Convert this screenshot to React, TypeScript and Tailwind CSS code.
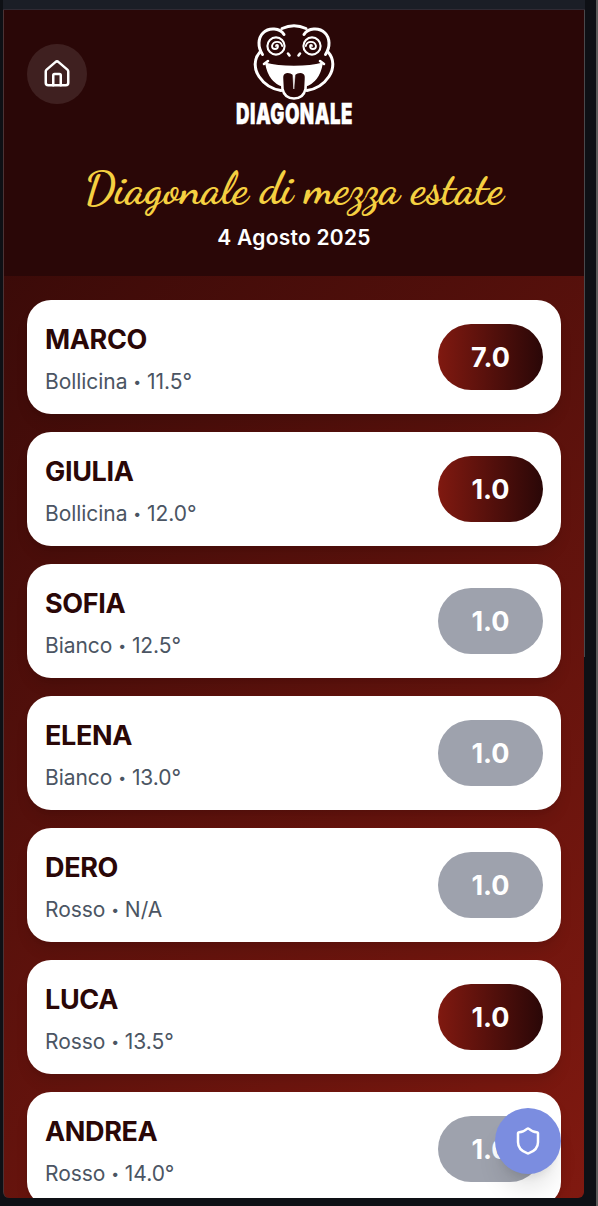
import { House, Shield } from "lucide-react";

type Entry = { name: string; drink: string; degree: string; score: string; active: boolean };

const entries: Entry[] = [
  { name: "MARCO", drink: "Bollicina", degree: "11.5°", score: "7.0", active: true },
  { name: "GIULIA", drink: "Bollicina", degree: "12.0°", score: "1.0", active: true },
  { name: "SOFIA", drink: "Bianco", degree: "12.5°", score: "1.0", active: false },
  { name: "ELENA", drink: "Bianco", degree: "13.0°", score: "1.0", active: false },
  { name: "DERO", drink: "Rosso", degree: "N/A", score: "1.0", active: false },
  { name: "LUCA", drink: "Rosso", degree: "13.5°", score: "1.0", active: true },
  { name: "ANDREA", drink: "Rosso", degree: "14.0°", score: "1.0", active: false },
];

const spiral = "M0 0A1 1 0 0 1 2 0A3 3 0 0 1 -4 0A5.200 5.200 0 0 1 6.200 0";

function Logo() {
  return (
    <svg className="ml-px h-[125px] w-[150px]" viewBox="0 0 150 125" fill="none" stroke="#fff" strokeWidth="3" strokeLinecap="round">
      <path d="M62 18.500Q74 13 86 18.500" />
      <path d="M64 24.500C60 18 49 17 43 23C38 28 37.500 37 42.500 44.500" />
      <path d="M84 24.500C88 18 99 17 105 23C110 28 110.500 37 105.500 44.500" />
      <path d="M40 42C33.500 49 34 59 39 66.500C44 74 51 79 61 80.500" />
      <path d="M108 42C114.500 49 114 59 109 66.500C104 74 97 79 87 80.500" />
      <circle cx="56" cy="36" r="8.600" strokeWidth="2.100" />
      <circle cx="92" cy="36" r="8.600" strokeWidth="2.100" />
      <path d={spiral} transform="translate(56 36)" strokeWidth="1.800" />
      <path d={spiral} transform="translate(92 36) scale(-1 1)" strokeWidth="1.800" />
      <path d="M68 43.500L69.500 45.500M80 43.500L78.500 45.500" strokeWidth="2.600" />
      <path d="M44 54L48 51M104 54L100 51" strokeWidth="2.600" />
      <path d="M46 53.500C60 57.500 88 57.500 102 53.500C100 65 94 73 85 76H63C54 73 48 65 46 53.500Z" fill="#fff" strokeWidth="1.600" />
      <path d="M62 69C61 60.500 69 60.500 74 64C79 60.500 87 60.500 86 69L85.500 79C84 86 80 88.500 74 88.500C68 88.500 64 86 62.500 79Z" fill="#2a0707" strokeWidth="2.600" />
      <path d="M72.800 63L73.800 79L75.200 63Z" fill="#fff" strokeWidth="0.600" />
      <text x="16" y="78.400" textLength="117" lengthAdjust="spacingAndGlyphs" transform="scale(1 1.450)" fill="#fff" strokeWidth="0.250" className="font-['Inter'] text-[19.500px] font-black tracking-[0.500px]">
        DIAGONALE
      </text>
    </svg>
  );
}

export default function App() {
  return (
    <div className="flex h-[1206px] w-[598px] overflow-hidden border-r-2 border-[#5c5c5c] bg-[#0e1015] font-['Inter',sans-serif]">
      <div className="flex w-full flex-col pl-[3px]">
        <div className="h-[10px] w-[582px] shrink-0 border-b border-[#302a33] bg-[#1b1e26]" />
        <div className="flex">
          <main className="relative h-[1188px] w-[581px] shrink-0 overflow-hidden rounded-b-md border-l border-[#4b3335] bg-linear-135/srgb from-[#2f0807] to-[#801910]">
            <header className="relative flex h-[266px] flex-col items-center bg-[#2a0707]">
              <button aria-label="Home" className="absolute top-[34px] left-[23px] flex size-[60px] items-center justify-center rounded-full bg-white/10 text-white">
                <House className="size-[30px]" strokeWidth={2} />
              </button>
              <Logo />
              <h1 className="mt-[22px] h-[65px] text-[45px] leading-[64px] font-bold whitespace-nowrap text-[#f5d041] font-['Dancing_Script','Z003','URW_Chancery_L',cursive]">
                Diagonale di mezza estate
              </h1>
              <p className="text-[21px] leading-[32px] font-semibold tracking-[0.25px] text-white">4 Agosto 2025</p>
            </header>
            <ul className="flex flex-col gap-[18px] px-[23px] pt-6">
              {entries.map((e) => (
                <li key={e.name} className="flex h-[114px] items-center justify-between rounded-3xl bg-white px-[18px] shadow-lg">
                  <div className="pt-[7px]">
                    <h2 className="text-[27px] leading-[42px] font-bold tracking-[-0.35px] text-[#2a0707]">{e.name}</h2>
                    <p className="text-[21px] leading-[42px] tracking-[-0.05px] text-[#4b5563]">
                      {e.drink} <span className="align-[2.5px] text-[14px] leading-none">•</span> {e.degree}
                    </p>
                  </div>
                  <span className={`flex h-[66px] w-[105px] items-center justify-center rounded-full pt-0.5 text-[27px] font-bold text-white ${e.active ? "bg-linear-to-r/srgb from-[#801910] to-[#2a0707]" : "bg-[#9ea2ad]"}`}>
                    {e.score}
                  </span>
                </li>
              ))}
            </ul>
            <button aria-label="Admin" className="absolute right-[23px] bottom-6 flex size-[66px] items-center justify-center rounded-full bg-[#7b8de0] text-white shadow-xl">
              <Shield className="size-[30px]" strokeWidth={2} />
            </button>
          </main>
          <div className="h-[647px] w-px bg-[#4a484b]" />
        </div>
      </div>
    </div>
  );
}
